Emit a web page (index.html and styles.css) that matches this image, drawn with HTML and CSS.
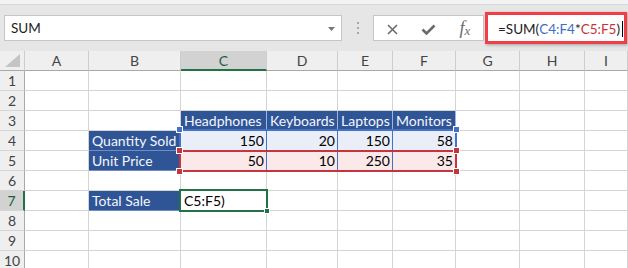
FILE: index.html
```html
<!DOCTYPE html>
<html lang="en">
<head>
    <meta charset="UTF-8">
    <title>Total Sale - SUM</title>
    <link rel="stylesheet" href="styles.css">
</head>
<body>
    <div class="top-strip"></div>
    <div class="formula-bar">
        <div class="name-box">
            <span>SUM</span>
            <svg width="7" height="4" viewBox="0 0 7 4"><path d="M0 0H7L3.5 4Z" fill="#777"/></svg>
        </div>
        <div class="grip"><i></i><i></i><i></i></div>
        <div class="fx-buttons">
            <span class="btn">
                <svg width="11" height="11" viewBox="0 0 11 11"><path d="M1 1L10 10M10 1L1 10" stroke="#6b6b6b" stroke-width="1.6"/></svg>
            </span>
            <span class="btn">
                <svg width="15" height="11" viewBox="0 0 15 11"><path d="M1.5 5.5L5.5 9.5L13.5 1.5" fill="none" stroke="#6b6b6b" stroke-width="2.6"/></svg>
            </span>
            <span class="btn fx">f<span>x</span></span>
        </div>
        <div class="formula-input">
            <span>=SUM(</span><span class="ref-blue">C4:F4</span><span>*</span><span class="ref-red">C5:F5</span><span>)</span><span class="caret"></span>
        </div>
    </div>

    <div class="sheet">
        <!-- column headers -->
        <div class="ch corner"><span class="tri"></span></div>
        <div class="ch">A</div>
        <div class="ch">B</div>
        <div class="ch sel">C</div>
        <div class="ch">D</div>
        <div class="ch">E</div>
        <div class="ch">F</div>
        <div class="ch">G</div>
        <div class="ch">H</div>
        <div class="ch">I</div>

        <!-- row 1 -->
        <div class="rh">1</div>
        <div></div><div></div><div></div><div></div><div></div><div></div><div></div><div></div><div></div>

        <!-- row 2 -->
        <div class="rh">2</div>
        <div></div><div></div><div></div><div></div><div></div><div></div><div></div><div></div><div></div>

        <!-- row 3 -->
        <div class="rh">3</div>
        <div></div>
        <div></div>
        <div class="th">Headphones</div>
        <div class="th">Keyboards</div>
        <div class="th">Laptops</div>
        <div class="th">Monitors</div>
        <div></div><div></div><div></div>

        <!-- row 4 -->
        <div class="rh">4</div>
        <div></div>
        <div class="lbl">Quantity Sold</div>
        <div class="num r4 first">150
            <div class="range blue">
                <i class="h tl"></i><i class="h tr"></i>
            </div>
        </div>
        <div class="num r4">20</div>
        <div class="num r4">150</div>
        <div class="num r4 last">58</div>
        <div></div><div></div><div></div>

        <!-- row 5 -->
        <div class="rh">5</div>
        <div></div>
        <div class="lbl">Unit Price</div>
        <div class="num r5 first">50
            <div class="range red">
                <i class="h tl"></i><i class="h tr"></i><i class="h bl"></i><i class="h br"></i>
            </div>
        </div>
        <div class="num r5">10</div>
        <div class="num r5">250</div>
        <div class="num r5 last">35</div>
        <div></div><div></div><div></div>

        <!-- row 6 -->
        <div class="rh">6</div>
        <div></div><div></div><div></div><div></div><div></div><div></div><div></div><div></div><div></div>

        <!-- row 7 -->
        <div class="rh sel">7</div>
        <div></div>
        <div class="lbl">Total Sale</div>
        <div class="active">C5:F5)
            <div class="sel-box"><i class="fill-handle"></i></div>
        </div>
        <div></div><div></div><div></div><div></div><div></div><div></div>

        <!-- row 8 -->
        <div class="rh">8</div>
        <div></div><div></div><div></div><div></div><div></div><div></div><div></div><div></div><div></div>

        <!-- row 9 -->
        <div class="rh">9</div>
        <div></div><div></div><div></div><div></div><div></div><div></div><div></div><div></div><div></div>

        <!-- row 10 -->
        <div class="rh">10</div>
        <div></div><div></div><div></div><div></div><div></div><div></div><div></div><div></div><div></div>
    </div>
</body>
</html>
```

FILE: styles.css
```css
* {
    box-sizing: border-box;
}

body {
    margin: 0;
    width: 628px;
    height: 268px;
    overflow: hidden;
    background: #ffffff;
    font-family: Lato, sans-serif;
    color: #000000;
}

/* ribbon edge above the formula bar */
.top-strip {
    height: 5px;
    background: #f3f3f3;
    border-bottom: 1px solid #d6d6d6;
}

.formula-bar {
    height: 46px;
    background: #e6e6e6;
    display: flex;
    align-items: center;
    padding-left: 4px;
}

.name-box {
    width: 338px;
    height: 26px;
    background: #ffffff;
    border: 1px solid #c6c6c6;
    display: flex;
    align-items: center;
    justify-content: space-between;
    padding: 0 6px;
    font-size: 13.5px;
    color: #222222;
}

.name-box svg {
    margin-top: 1px;
}

.grip {
    width: 31px;
    display: flex;
    flex-direction: column;
    align-items: center;
    gap: 3px;
}

.grip i {
    width: 2px;
    height: 2px;
    background: #a6a6a6;
}

.fx-buttons {
    width: 111px;
    height: 26px;
    background: #ffffff;
    border: 1px solid #c6c6c6;
    display: flex;
}

.btn {
    flex: 1;
    display: flex;
    align-items: center;
    justify-content: center;
    padding-top: 3px;
}

.btn.fx {
    font-family: "Liberation Serif", serif;
    font-style: italic;
    font-size: 18px;
    color: #6b6b6b;
    padding-top: 1px;
}

.btn.fx span {
    font-size: 13px;
    margin-top: 5px;
}

.formula-input {
    width: 142px;
    height: 32px;
    margin-left: 1px;
    background: #ffffff;
    border: 3px solid #ef3e46;
    box-shadow: 1px 1px 3px rgba(0, 0, 0, 0.3);
    display: flex;
    align-items: center;
    padding-left: 10px;
    padding-top: 2px;
    font-size: 13.5px;
    color: #222222;
    white-space: nowrap;
}

.ref-blue {
    color: #3e6fc6;
}

.ref-red {
    color: #c9333e;
}

.caret {
    width: 1px;
    height: 16px;
    margin-left: 2px;
    background: #000000;
}

/* worksheet grid */
.sheet {
    display: grid;
    grid-template-columns: 25px 64px 92px 86px 71px 55px 63px 64px 65px 1fr;
    grid-template-rows: repeat(11, 20px);
    font-size: 14px;
}

.sheet > div {
    border-right: 1px solid #d4d4d4;
    border-bottom: 1px solid #d4d4d4;
    line-height: 19px;
    padding: 0 3px;
    white-space: nowrap;
}

.sheet > .ch {
    background: #efefef;
    border-right-color: #cdcdcd;
    border-bottom-color: #a9a9a9;
    text-align: center;
    color: #444444;
    padding: 0;
}

.sheet > .rh {
    background: #efefef;
    border-right-color: #a9a9a9;
    text-align: center;
    color: #444444;
    padding: 0;
}

.sheet > .ch.sel {
    background: #d2d2d2;
    border-bottom: 2px solid #217346;
    color: #1d5e3a;
}

.sheet > .rh.sel {
    background: #d2d2d2;
    border-right: 2px solid #217346;
    color: #1d5e3a;
}

.corner {
    position: relative;
}

.tri {
    position: absolute;
    left: 5px;
    bottom: 3px;
    width: 0;
    height: 0;
    border-left: 15px solid transparent;
    border-bottom: 13px solid #c4c4c4;
}

.sheet > .th {
    background: #2f5597;
    color: #f4f6fb;
    border-right-color: #9fb5de;
    border-bottom-color: #2f5597;
}

.sheet > .lbl {
    background: #2f5597;
    color: #f4f6fb;
    border-right-color: #2f5597;
    border-bottom-color: #6f8cc4;
}

.sheet > .num {
    text-align: right;
    padding-right: 2px;
    border-right-color: #4472c4;
    position: relative;
}

.sheet > .r4 {
    background: #e9eef8;
}

.sheet > .r5 {
    background: #fbe8e9;
}

.sheet > .num.last {
    border-right-color: #d4d4d4;
}

/* formula reference highlights */
.range {
    position: absolute;
    left: -2px;
    width: 278px;
    border: 2px solid;
    z-index: 2;
}

.range.blue {
    top: -2px;
    height: 23px;
    border-color: #4472c4;
}

.range.red {
    top: -1px;
    height: 22px;
    border-color: #c5353f;
    z-index: 3;
}

.h {
    position: absolute;
    width: 7px;
    height: 7px;
    border: 1px solid #ffffff;
}

.blue .h {
    background: #4472c4;
}

.red .h {
    background: #c5353f;
}

.h.tl {
    left: -5px;
    top: -5px;
}

.h.tr {
    right: -5px;
    top: -5px;
}

.h.bl {
    left: -5px;
    bottom: -5px;
}

.h.br {
    right: -5px;
    bottom: -5px;
}

.sheet > .active {
    position: relative;
}

.sel-box {
    position: absolute;
    left: -2px;
    top: -2px;
    width: 89px;
    height: 23px;
    border: 2px solid #217346;
}

.fill-handle {
    position: absolute;
    right: -4px;
    bottom: -4px;
    width: 6px;
    height: 6px;
    background: #217346;
    border: 1px solid #ffffff;
}
```
